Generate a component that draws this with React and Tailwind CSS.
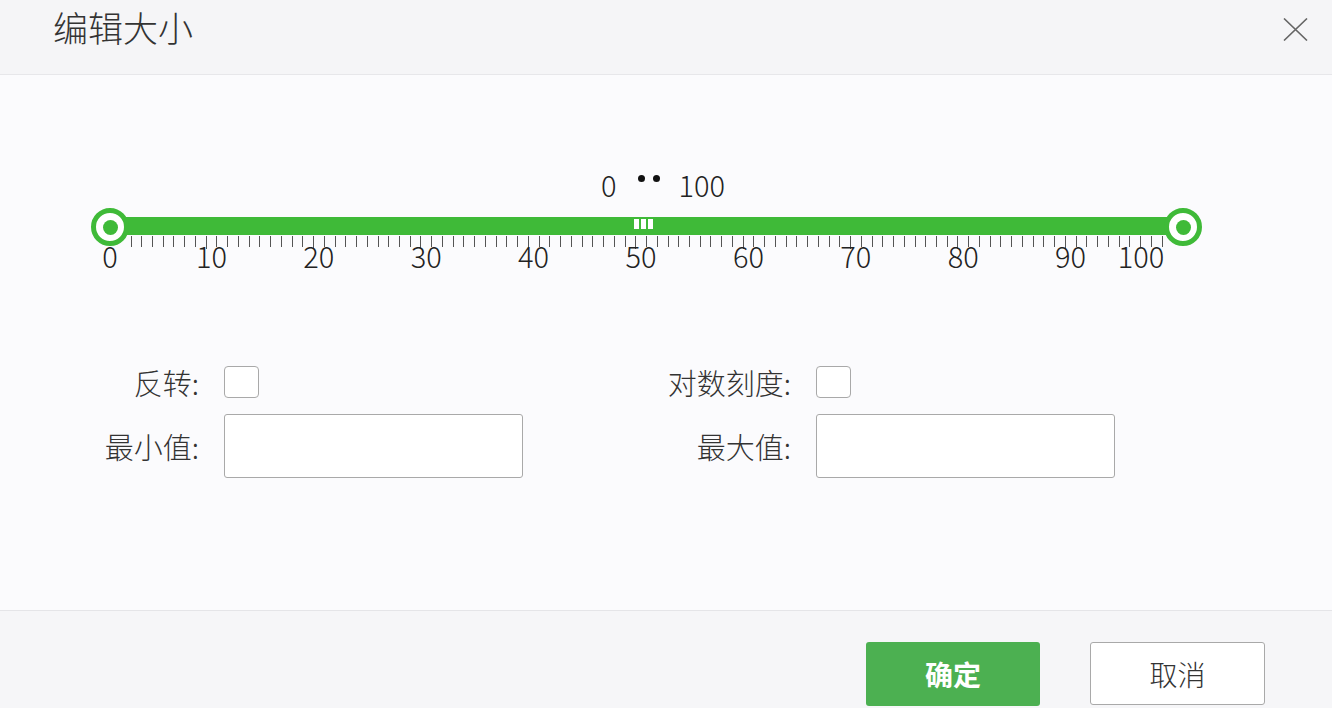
import React from "react";

const FONT = { fontFamily: '"Noto Sans CJK SC", "Noto Sans", sans-serif' };

// slider scale: value 0 sits at x=104 of the page, 10.74px per unit
const SCALE_LEFT = 104;
const UNIT = 10.74;
const SLIDER_LEFT = 88;

function Ticks() {
  const ticks = [];
  for (let i = 0; i < 97; i++) {
    const x = 130.5 - SLIDER_LEFT + i * UNIT;
    const major = i % 10 === 7;
    ticks.push(
      <line
        key={i}
        x1={Math.round(x) + 0.5}
        x2={Math.round(x) + 0.5}
        y1={0}
        y2={major ? 13 : 11}
        stroke="#555"
        strokeWidth="1"
      />
    );
  }
  return (
    <svg className="absolute left-0 top-[30px]" width="1120" height="14">
      {ticks}
    </svg>
  );
}

function Handle({ left }) {
  return (
    <div
      className="absolute top-[2px] w-[38px] h-[38px] rounded-full border-[5px] border-[#3fba38] bg-white flex items-center justify-center"
      style={{ left }}
    >
      <div className="w-[15px] h-[15px] rounded-full bg-[#3fba38]" />
    </div>
  );
}

function RangeSlider() {
  const labels = [0, 10, 20, 30, 40, 50, 60, 70, 80, 90, 100];
  return (
    <div className="relative ml-[88px] w-[1130px] h-[80px]">
      {/* track */}
      <div className="absolute left-[22px] top-[11px] w-[1073px] h-[18px] bg-[#3fba38]" />
      {/* center grip */}
      <div className="absolute left-[546px] top-[13px] flex gap-[2px]">
        <div className="w-[5px] h-[10px] bg-white" />
        <div className="w-[5px] h-[10px] bg-white" />
        <div className="w-[5px] h-[10px] bg-white" />
      </div>
      <Ticks />
      {labels.map((v) => {
        let center = SCALE_LEFT + v * UNIT - SLIDER_LEFT;
        if (v === 0) center = 110 - SLIDER_LEFT;
        if (v === 100) center = 1141 - SLIDER_LEFT;
        return (
          <span
            key={v}
            className="absolute top-[33px] w-[60px] -ml-[30px] text-center text-[29px] leading-[32px] font-light text-[#222]"
            style={{ left: center }}
          >
            {v}
          </span>
        );
      })}
      <Handle left={110 - SLIDER_LEFT - 19} />
      <Handle left={1183 - SLIDER_LEFT - 19} />
    </div>
  );
}

function Field({ label, children }) {
  return (
    <div className="flex items-center">
      <div className="w-[199px] text-right text-[29px] leading-[32px] font-light text-[#333]">{label}</div>
      <div className="ml-[25px]">{children}</div>
    </div>
  );
}

function Checkbox() {
  return <div className="w-[35px] h-[32px] rounded-[4px] border border-[#a9a9a9] bg-white" />;
}

function TextInput() {
  return (
    <input
      className="block w-[299px] h-[64px] rounded-[3px] border border-[#a9a9a9] bg-white px-3 text-[22px] outline-none"
      type="text"
    />
  );
}

export default function App() {
  return (
    <div className="w-[1332px] h-[708px] overflow-hidden flex flex-col bg-[#fbfbfd]" style={FONT}>
      {/* header */}
      <div className="h-[75px] shrink-0 flex items-start justify-between bg-[#f5f5f7] border-b border-[#e7e7ea]">
        <h1 className="ml-[53px] mt-[7px] text-[35px] leading-[40px] font-light text-[#333]">编辑大小</h1>
        <button className="mt-[16px] mr-[24px] w-[26px] h-[26px] flex items-center justify-center">
          <svg width="25" height="23" viewBox="0 0 25 23" fill="none" stroke="#666" strokeWidth="1.6">
            <path d="M1 0.5 L24 22.5 M24 0.5 L1 22.5" />
          </svg>
        </button>
      </div>

      {/* body */}
      <div className="flex-1 pt-[93px]">
        <div className="flex items-center h-[32px] pl-[601px] text-[29px] leading-[32px] font-light text-[#222]">
          <span>0</span>
          <span className="ml-[21px] mr-[19px] -mt-[12px] flex gap-[8px]">
            <span className="w-[7px] h-[7px] rounded-full bg-[#111]" />
            <span className="w-[7px] h-[7px] rounded-full bg-[#111]" />
          </span>
          <span>100</span>
        </div>
        <div className="mt-[6px]">
          <RangeSlider />
        </div>

        <div className="mt-[80px] flex gap-[69px]">
          <div className="flex flex-col gap-[16px]">
            <Field label="反转:">
              <Checkbox />
            </Field>
            <Field label="最小值:">
              <TextInput />
            </Field>
          </div>
          <div className="flex flex-col gap-[16px]">
            <Field label="对数刻度:">
              <Checkbox />
            </Field>
            <Field label="最大值:">
              <TextInput />
            </Field>
          </div>
        </div>
      </div>

      {/* footer */}
      <div className="h-[98px] shrink-0 bg-[#f6f6f8] border-t border-[#e5e5e8] flex justify-end items-start pt-[31px] pr-[67px] gap-[50px]">
        <button className="w-[174px] h-[64px] rounded-[3px] bg-[#4cb051] text-white text-[28px] font-bold">
          确定
        </button>
        <button className="w-[175px] h-[63px] rounded-[3px] border border-[#a9a9a9] bg-white text-[#333] text-[28px] font-light">
          取消
        </button>
      </div>
    </div>
  );
}
